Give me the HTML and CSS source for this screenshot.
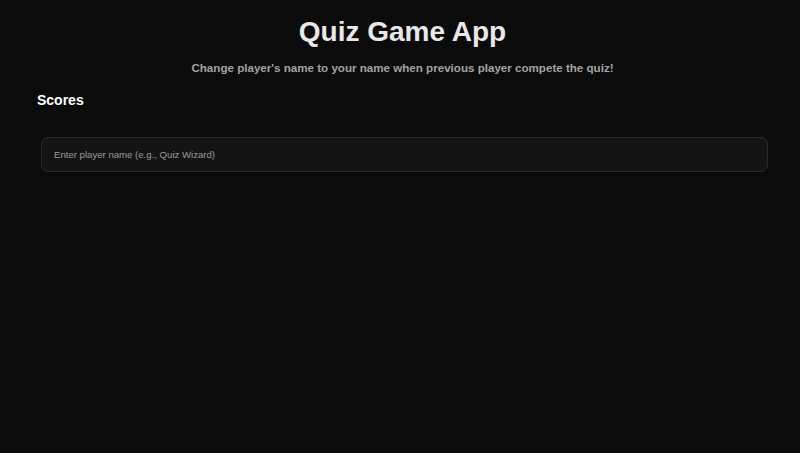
FILE: index.html
```html
<!DOCTYPE html>
<html>
<head>
<meta charset="utf-8">
<link rel="stylesheet" href="styles.css">
</head>
<body>
<div class="app">
  <h1 class="title">Quiz Game App</h1>
  <p class="subtitle">Change player's name to your name when previous player compete the quiz!</p>
  <h2 class="scores">Scores</h2>
  <div class="field">
    <input class="name-input" type="text" placeholder="Enter player name (e.g., Quiz Wizard)">
  </div>
</div>
</body>
</html>
```
FILE: styles.css
```css
html, body {
  margin: 0;
  padding: 0;
  background: #0b0b0b;
  height: 100%;
}
body {
  font-family: "Liberation Sans", Arial, sans-serif;
  color: #e8e8e8;
}
.app {
  padding: 14px 32px 0 37px;
}
.title {
  margin: 0;
  text-align: center;
  font-size: 28px;
  font-weight: bold;
  line-height: 36px;
  color: #e8e8e8;
}
.subtitle {
  margin: 11px 0 0;
  text-align: center;
  font-size: 11.6px;
  font-weight: bold;
  line-height: 14px;
  color: #a3a3a3;
}
.scores {
  margin: 16px 0 0;
  font-size: 14px;
  font-weight: bold;
  line-height: 18px;
  color: #ffffff;
}
.field {
  margin: 28px 0 0 4px;
}
.name-input {
  box-sizing: border-box;
  width: 727px;
  height: 35px;
  display: block;
  background: #141414;
  border: 1px solid #2a2a2a;
  border-radius: 7px;
  padding: 0 12px;
  font-family: "Liberation Sans", Arial, sans-serif;
  font-size: 9.6px;
  color: #e0e0e0;
  outline: none;
}
.name-input::placeholder {
  color: #9a9a9a;
}
```
